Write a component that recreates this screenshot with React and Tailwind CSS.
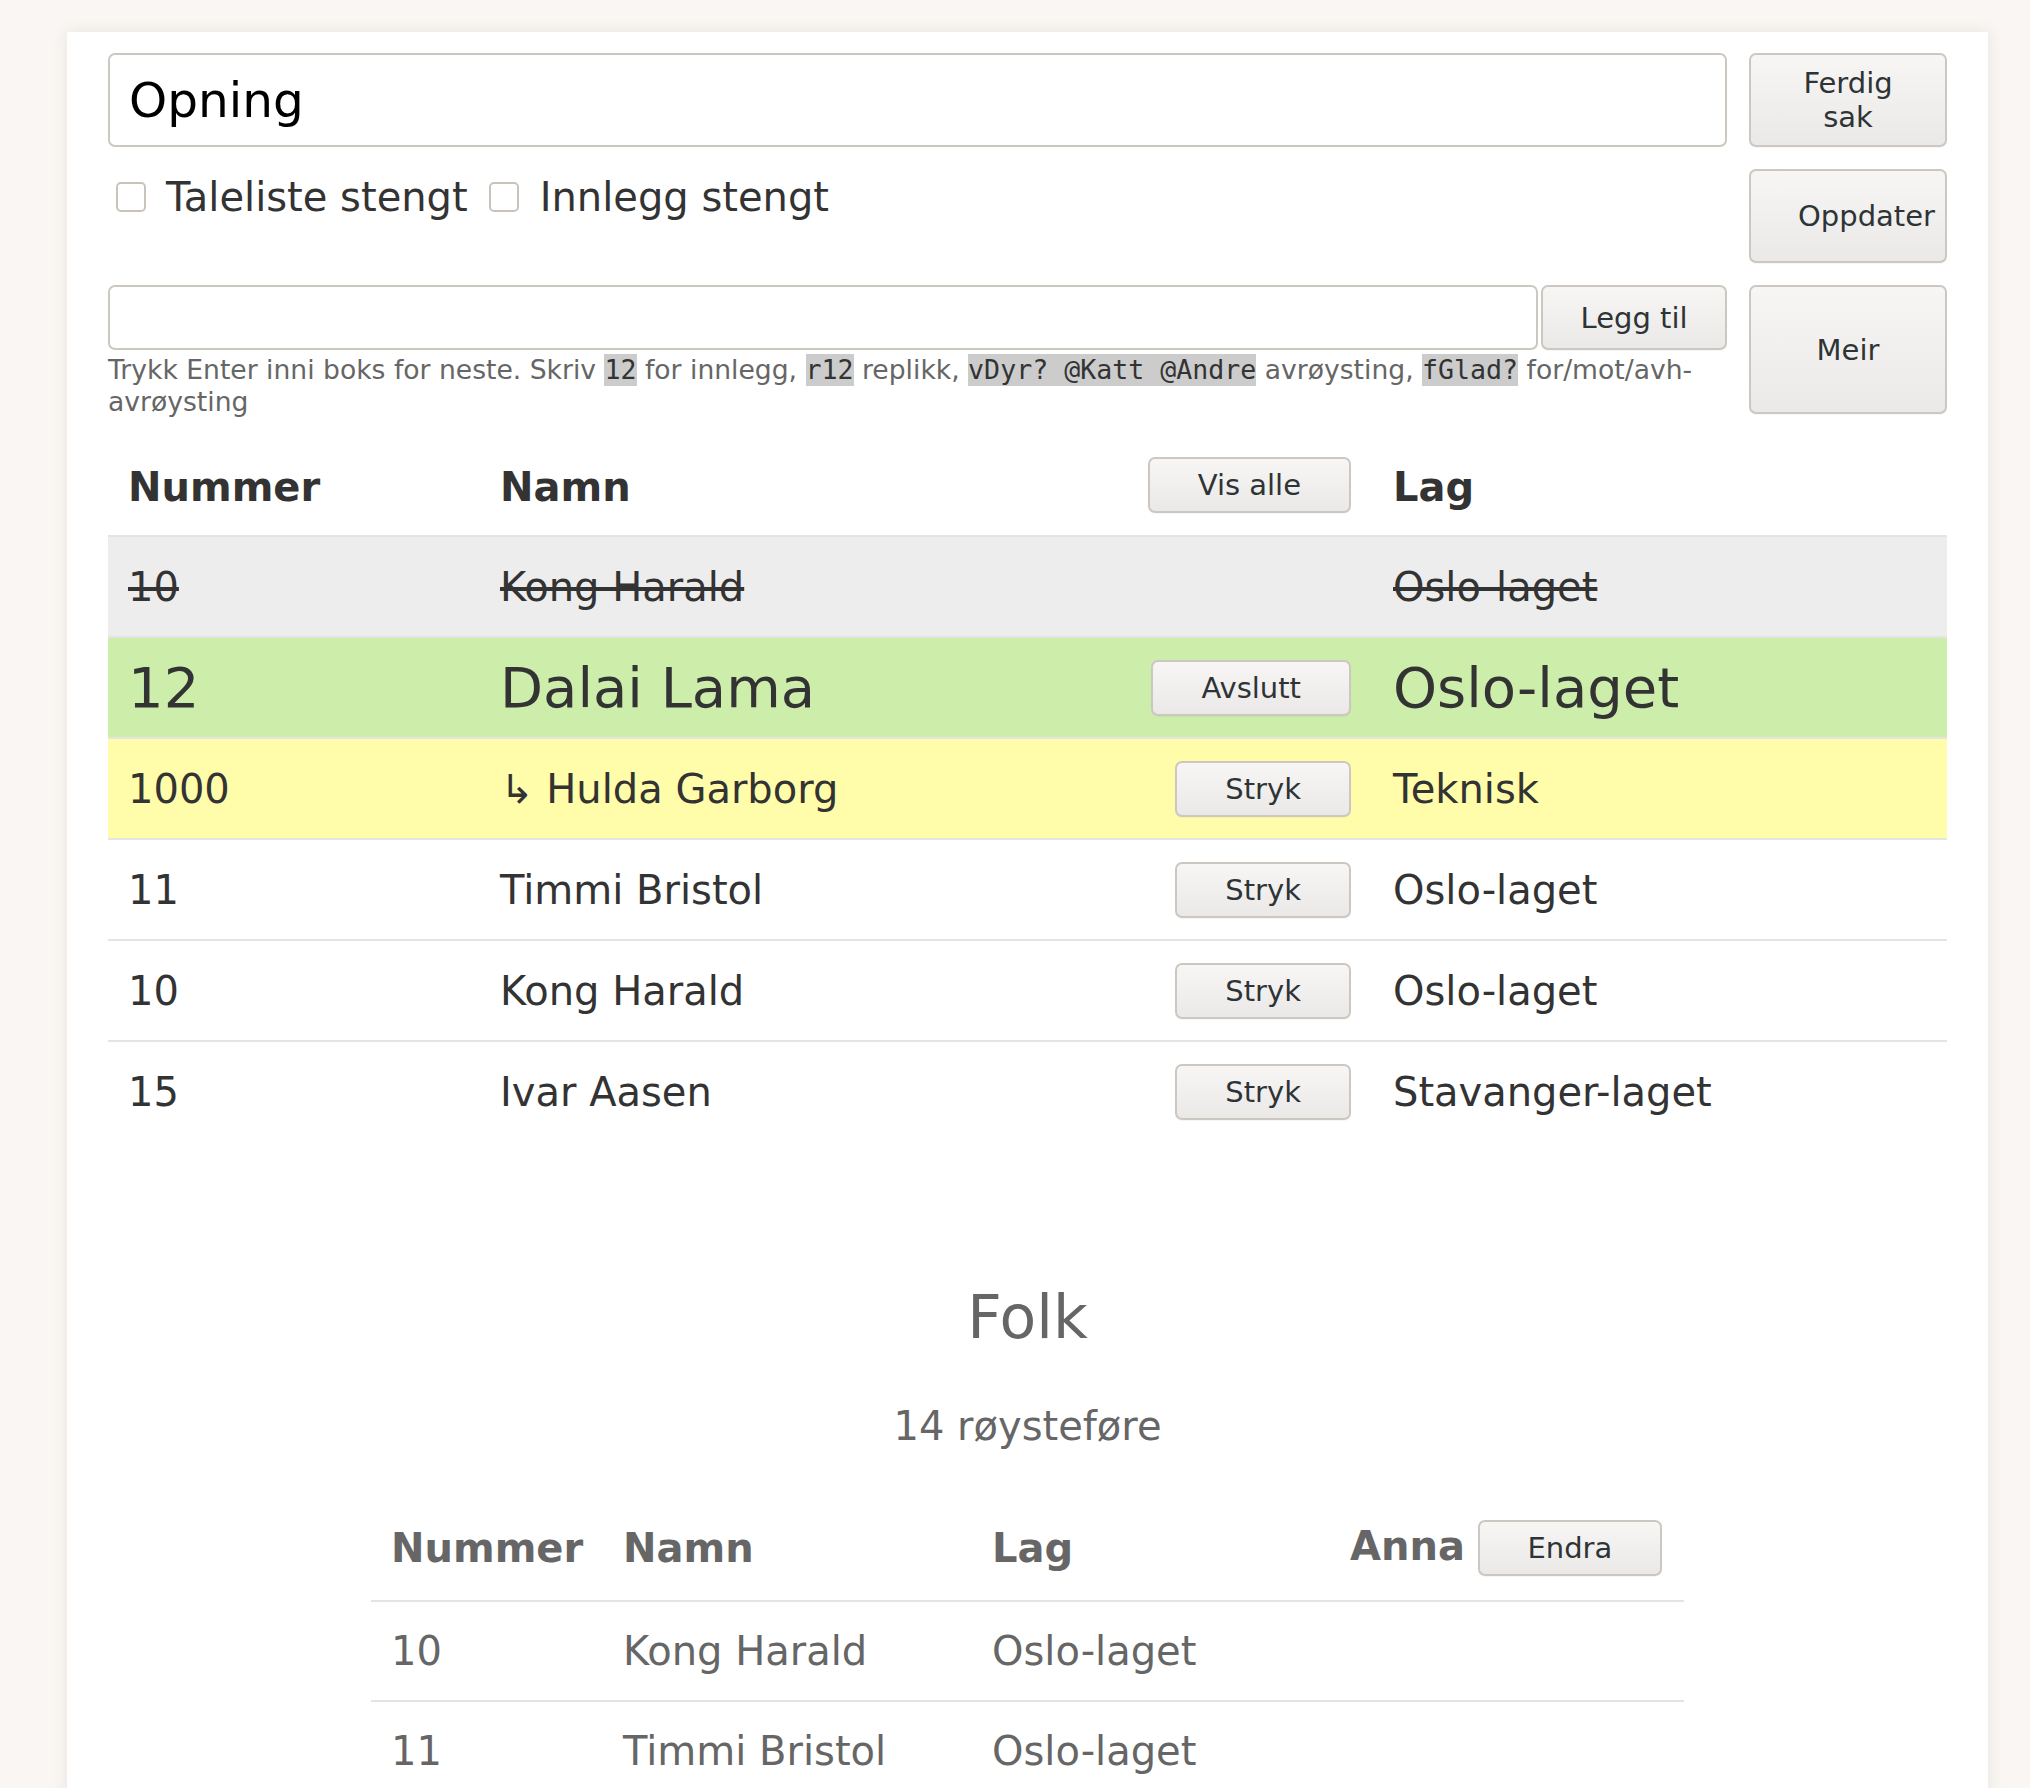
import React from "react";

function Btn({ children, className = "" }) {
  return (
    <button
      className={
        "rounded-[7px] border-2 border-[#cdc7c1] bg-linear-to-b from-[#f7f6f5] to-[#ebe9e7] text-[#2e3436] text-[29px] leading-[34px] shadow-[0_1px_1px_rgba(0,0,0,0.04)] " +
        className
      }
    >
      {children}
    </button>
  );
}

function Code({ children }) {
  return (
    <code className="inline-block bg-[#cccccc] text-[#333] font-['DejaVu_Sans_Mono',monospace] text-[26.6px] leading-[32px] align-top">
      {children}
    </code>
  );
}

const rows = [
  { num: "10", name: "Kong Harald", lag: "Oslo-laget", bg: "bg-[#ededed]", strike: true },
  { num: "12", name: "Dalai Lama", lag: "Oslo-laget", bg: "bg-[#cdedab]", big: true, btn: "Avslutt" },
  { num: "1000", name: "↳ Hulda Garborg", lag: "Teknisk", bg: "bg-[#fffda9]", btn: "Stryk" },
  { num: "11", name: "Timmi Bristol", lag: "Oslo-laget", bg: "bg-white", btn: "Stryk" },
  { num: "10", name: "Kong Harald", lag: "Oslo-laget", bg: "bg-white", btn: "Stryk" },
  { num: "15", name: "Ivar Aasen", lag: "Stavanger-laget", bg: "bg-white", btn: "Stryk" },
];

const folk = [
  { num: "10", name: "Kong Harald", lag: "Oslo-laget" },
  { num: "11", name: "Timmi Bristol", lag: "Oslo-laget" },
];

export default function App() {
  return (
    <div className="h-[1788px] overflow-hidden bg-[#f9f6f3] font-['DejaVu_Sans',Verdana,sans-serif]">
      <div className="ml-[67px] mt-[32px] w-[1921px] min-h-[1800px] bg-white shadow-[0_0_14px_rgba(120,100,80,0.12)] px-[41px] pt-[21px]">
        {/* Top controls */}
        <div className="flex gap-[22px]">
          <div className="flex-1 flex flex-col">
            <div className="h-[94px] rounded-[7px] border-2 border-[#cdc7c1] pl-[19px] flex items-center text-[48.5px] text-black">
              Opning
            </div>
            <div className="mt-[35px] flex items-center h-[30px] text-[40px] text-[#333]">
              <span className="w-[30px] h-[30px] rounded-[5px] border-2 border-[#c9c3bc] bg-white ml-[8px]" />
              <span className="ml-[20px]">Taleliste stengt</span>
              <span className="w-[30px] h-[30px] rounded-[5px] border-2 border-[#c9c3bc] bg-white ml-[21px]" />
              <span className="ml-[21px]">Innlegg stengt</span>
            </div>
            <div className="mt-[73px] flex h-[65px]">
              <div className="flex-1 rounded-[7px] border-2 border-[#cdc7c1] bg-white" />
              <Btn className="w-[186px] ml-[3px] h-[65px]">Legg til</Btn>
            </div>
            <p className="mt-[4px] text-[26.6px] leading-[32px] text-[#666]">
              Trykk Enter inni boks for neste. Skriv <Code>12</Code> for innlegg, <Code>r12</Code> replikk,{" "}
              <Code>vDyr? @Katt @Andre</Code> avrøysting, <Code>fGlad?</Code> for/mot/avh-avrøysting
            </p>
          </div>
          <div className="w-[198px] flex flex-col gap-[22px]">
            <Btn className="h-[94px] w-full px-[49px] text-center">Ferdig sak</Btn>
            <Btn className="h-[94px] w-full pl-[47px] text-left whitespace-nowrap overflow-visible">Oppdater</Btn>
            <Btn className="h-[129px] w-full text-center">Meir</Btn>
          </div>
        </div>

        {/* Speaker table */}
        <div className="mt-[17px] text-[#333]">
          <div className="flex items-center h-[100px] text-[40px] font-bold">
            <div className="w-[372px] pl-[20px] pt-[4px]">Nummer</div>
            <div className="w-[892px] pl-[20px] pr-[21px] flex items-center justify-between">
              <span className="pt-[4px]">Namn</span>
              <Btn className="h-[56px] px-[48px] font-normal">Vis alle</Btn>
            </div>
            <div className="flex-1 pl-[21px] pt-[4px]">Lag</div>
          </div>
          {rows.map((r, i) => (
            <div
              key={i}
              className={
                "flex items-center h-[101px] border-t-2 border-[#e4e4e4] " +
                r.bg +
                (r.big ? " text-[56px]" : " text-[40px]") +
                (r.strike ? " line-through" : "")
              }
            >
              <div className="w-[372px] pl-[20px]">{r.num}</div>
              <div className="w-[892px] pl-[20px] pr-[21px] flex items-center justify-between">
                <span>{r.name}</span>
                {r.btn && (
                  <Btn className="h-[56px] px-[48px] no-underline">{r.btn}</Btn>
                )}
              </div>
              <div className="flex-1 pl-[21px]">{r.lag}</div>
            </div>
          ))}
        </div>

        {/* Folk section */}
        <div className="text-[#666] flex flex-col items-center">
          <h2 className="mt-[143px] text-[60px] leading-[66px]">Folk</h2>
          <p className="mt-[53px] text-[40px] leading-[46px]">14 røysteføre</p>
          <div className="mt-[47px] w-[1313px]">
            <div className="flex items-center h-[106px] border-b-2 border-[#e4e4e4] text-[40px] font-bold">
              <div className="w-[232px] pl-[20px]">Nummer</div>
              <div className="w-[368px] pl-[20px]">Namn</div>
              <div className="w-[358px] pl-[21px]">Lag</div>
              <div className="flex-1 pl-[21px] flex items-center gap-[13px]">
                <span className="-mt-[4px]">Anna</span>
                <Btn className="h-[56px] w-[184px] font-normal">Endra</Btn>
              </div>
            </div>
            {folk.map((f, i) => (
              <div key={i} className="flex items-center h-[100px] border-b-2 border-[#e4e4e4] text-[40px]">
                <div className="w-[232px] pl-[20px]">{f.num}</div>
                <div className="w-[368px] pl-[20px]">{f.name}</div>
                <div className="w-[358px] pl-[21px]">{f.lag}</div>
                <div className="flex-1" />
              </div>
            ))}
          </div>
        </div>
      </div>
    </div>
  );
}
